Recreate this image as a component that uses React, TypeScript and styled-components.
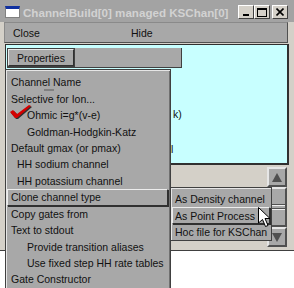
import React from "react";
import styled, { createGlobalStyle } from "styled-components";

const Global = createGlobalStyle`
  html, body { margin: 0; padding: 0; background: #ffffff; }
  body { font-family: "Liberation Sans", Arial, sans-serif; }
`;

const Page = styled.div`
  width: 294px;
  height: 288px;
  position: relative;
  overflow: hidden;
  background: #ffffff;
`;

const Window = styled.div`
  position: relative;
  width: 294px;
  height: 251px;
  box-sizing: border-box;
  background: #d4d0c8;
  display: flex;
  flex-direction: column;
  border-bottom: 1px solid #404040;
`;

const TitleBar = styled.div`
  height: 22px;
  display: flex;
  align-items: center;
  padding: 0 6px 0 5px;
  background: #a3a3a3;
  gap: 3px;
`;

const Title = styled.div`
  flex: 1;
  color: #d2d2d2;
  font-weight: bold;
  font-size: 11.6px;
  white-space: nowrap;
  padding-top: 2px;
`;

const AppIcon = styled.div`
  width: 15px;
  height: 12px;
  box-sizing: border-box;
  border: 1px solid #808080;
  border-top: 3px solid #1030a0;
  background: #ffffff;
  margin-top: 1px;
`;

const CtrlGroup = styled.div`
  display: flex;
  align-items: center;
  margin-top: 2px;
`;

const CtrlBtn = styled.div<{ $gap?: number }>`
  width: 16px;
  height: 14px;
  box-sizing: border-box;
  background: #d4d0c8;
  border: 1px solid;
  border-color: #ffffff #404040 #404040 #ffffff;
  margin-left: ${(p) => p.$gap ?? 0}px;
  display: flex;
  align-items: center;
  justify-content: center;
  color: #000;
`;

const MenuBar = styled.div`
  height: 21px;
  margin: 0 6px 0 4px;
  box-sizing: border-box;
  background: #a8a8a8;
  border: 1px solid;
  border-color: #8a8a8a #505050 #505050 #8a8a8a;
  display: flex;
  align-items: center;
  font-size: 10.5px;
  color: #111;
`;

const MenuBarItem = styled.span<{ $w: number }>`
  width: ${(p) => p.$w}px;
  padding-left: 8px;
`;

const Cyan = styled.div`
  margin: 1px 5px 0 5px;
  height: 121px;
  box-sizing: border-box;
  background: #c8ffff;
  border: 1px solid #303030;
  border-right-width: 2px;
  border-bottom-width: 2px;
  padding: 3px 0 0 1px;
  position: relative;
`;

const InnerBar = styled.div`
  width: 175px;
  height: 20px;
  box-sizing: border-box;
  background: #a8a8a8;
  border-right: 1px solid #404040;
  border-bottom: 1px solid #404040;
  padding: 1px 0 0 1px;
`;

const PropBtn = styled.div`
  width: 66px;
  height: 17px;
  box-sizing: border-box;
  border: 1px solid;
  border-color: #e8e8e8 #303030 #303030 #e8e8e8;
  outline: 1px solid #404040;
  background: #a8a8a8;
  font-size: 10.5px;
  color: #111;
  display: flex;
  align-items: center;
  justify-content: center;
`;

const BehindText = styled.div<{ $top: number; $left: number }>`
  position: absolute;
  left: ${(p) => p.$left}px;
  top: ${(p) => p.$top}px;
  font-size: 10.5px;
  color: #111;
`;

const Lower = styled.div`
  flex: 1;
  margin: 0 5px 0 5px;
  border-left: 1px solid #505050;
  display: flex;
  padding: 2px 2px 3px 0;
`;

const LowerPanel = styled.div`
  flex: 1;
  margin-top: 20px;
  border-top: 1px solid #505050;
  box-shadow: inset 0 1px 0 #e8e8e8;
`;

const Scroll = styled.div`
  width: 20px;
  display: flex;
  flex-direction: column;
  background: #a8a8a8;
`;

const ScrollBtn = styled.div<{ $h: number }>`
  height: ${(p) => p.$h}px;
  box-sizing: border-box;
  border: 2px solid;
  border-color: #e6e6e6 #505050 #505050 #e6e6e6;
  background: #a8a8a8;
  display: flex;
  align-items: center;
  justify-content: center;
`;

const Thumb = styled.div`
  flex: 1;
  box-sizing: border-box;
  border: 2px solid;
  border-color: #e6e6e6 #505050 #505050 #e6e6e6;
  background: #a8a8a8;
  display: flex;
  flex-direction: column;
  justify-content: center;
  gap: 2px;
`;

const Grip = styled.div`
  height: 1px;
  background: #505050;
  border-bottom: 1px solid #f0f0f0;
`;

const Menu = styled.div`
  position: absolute;
  left: 5px;
  top: 69px;
  width: 166px;
  height: 222px;
  box-sizing: border-box;
  background: #a8a8a8;
  border: 1px solid #404040;
  box-shadow: inset 1px 1px 0 #e6e6e6, inset -1px -1px 0 #707070;
  padding: 4px 2px 0 1px;
  display: flex;
  flex-direction: column;
  font-size: 10.5px;
  color: #111;
`;

const Item = styled.div<{ $indent: number; $active?: boolean }>`
  height: 16.45px;
  box-sizing: border-box;
  display: flex;
  align-items: center;
  padding-left: ${(p) => p.$indent}px;
  white-space: nowrap;
  position: relative;
  ${(p) =>
    p.$active
      ? `border: 1px solid; border-color: #ececec #303030 #303030 #ececec; box-shadow: 1px 1px 0 #303030; padding-left: ${p.$indent - 1}px;`
      : ""}
`;

const Check = styled.svg`
  position: absolute;
  left: 3px;
  top: -2px;
`;

const Mark = styled.span`
  position: absolute;
  left: 37px;
  top: 15px;
  width: 10px;
  height: 2px;
  background: #808080;
`;

const SubMenu = styled.div`
  position: absolute;
  left: 170px;
  top: 187px;
  width: 102px;
  height: 54px;
  box-sizing: border-box;
  background: #a8a8a8;
  border: 1px solid #404040;
  box-shadow: inset 1px 1px 0 #e6e6e6;
  padding: 3px 1px 0 1px;
  display: flex;
  flex-direction: column;
  font-size: 10.5px;
  color: #111;
`;

const Cursor = styled.svg`
  position: absolute;
  left: 258px;
  top: 207px;
`;

const items: { t: string; i: number; active?: boolean; check?: boolean; mark?: boolean }[] = [
  { t: "Channel Name", i: 4, mark: true },
  { t: "Selective for Ion...", i: 4 },
  { t: "Ohmic i=g*(v-e)", i: 20, check: true },
  { t: "Goldman-Hodgkin-Katz", i: 20 },
  { t: "Default gmax (or pmax)", i: 4 },
  { t: "HH sodium channel", i: 10 },
  { t: "HH potassium channel", i: 10 },
  { t: "Clone channel type", i: 4, active: true },
  { t: "Copy gates from", i: 4 },
  { t: "Text to stdout", i: 4 },
  { t: "Provide transition aliases", i: 20 },
  { t: "Use fixed step HH rate tables", i: 20 },
  { t: "Gate Constructor", i: 4 },
];

const subItems = [
  { t: "As Density channel" },
  { t: "As Point Process", active: true },
  { t: "Hoc file for KSChan" },
];

export default function App() {
  return (
    <Page>
      <Global />
      <Window>
        <TitleBar>
          <AppIcon />
          <Title>ChannelBuild[0] managed KSChan[0]</Title>
          <CtrlGroup>
            <CtrlBtn>
              <svg width="8" height="8" viewBox="0 0 8 8">
                <rect x="1" y="6" width="6" height="2" fill="#000" />
              </svg>
            </CtrlBtn>
            <CtrlBtn>
              <svg width="10" height="9" viewBox="0 0 10 9">
                <rect x="0.5" y="0.5" width="9" height="8" fill="none" stroke="#000" />
                <rect x="0" y="0" width="10" height="2" fill="#000" />
              </svg>
            </CtrlBtn>
            <CtrlBtn $gap={2}>
              <svg width="8" height="8" viewBox="0 0 8 8">
                <path d="M0.5 0.5 L7.5 7.5 M7.5 0.5 L0.5 7.5" stroke="#000" strokeWidth="1.6" />
              </svg>
            </CtrlBtn>
          </CtrlGroup>
        </TitleBar>
        <MenuBar>
          <MenuBarItem $w={110}>Close</MenuBarItem>
          <MenuBarItem $w={60}>Hide</MenuBarItem>
        </MenuBar>
        <Cyan>
          <InnerBar>
            <PropBtn>Properties</PropBtn>
          </InnerBar>
          <BehindText $top={63} $left={167}>k)</BehindText>
          <BehindText $top={98} $left={165}>l</BehindText>
        </Cyan>
        <Lower>
          <LowerPanel />
          <Scroll>
            <ScrollBtn $h={20}>
              <svg width="10" height="9" viewBox="0 0 10 9">
                <path d="M5 0 L10 9 L0 9 Z" fill="#505050" />
              </svg>
            </ScrollBtn>
            <Thumb>
              <Grip />
              <Grip />
            </Thumb>
            <ScrollBtn $h={20}>
              <svg width="10" height="9" viewBox="0 0 10 9">
                <path d="M0 0 L10 0 L5 9 Z" fill="#505050" />
              </svg>
            </ScrollBtn>
          </Scroll>
        </Lower>
        <Menu>
          {items.map((it) => (
            <Item key={it.t} $indent={it.i} $active={it.active}>
              {it.check && (
                <Check width="23" height="15" viewBox="0 0 23 15">
                  <path d="M1 8 L4 6 L8 10 L20 1 L22 2 L8 14 L6 14 Z" fill="#303030" />
                  <path d="M0 7 L3 5 L7 9 L19 0 L21 1 L7 13 L5 13 Z" fill="#d40000" />
                </Check>
              )}
              {it.t}
              {it.mark && <Mark />}
            </Item>
          ))}
        </Menu>
        <SubMenu>
          {subItems.map((it) => (
            <Item key={it.t} $indent={3} $active={it.active}>
              {it.t}
            </Item>
          ))}
        </SubMenu>
        <Cursor width="14" height="22" viewBox="0 0 14 22">
          <path d="M0.5 0.5 L0.5 16 L4.5 12.5 L7.5 19.5 L10 18.5 L7 11.5 L12 11.5 Z" fill="#ffffff" stroke="#000" strokeWidth="1" />
        </Cursor>
      </Window>
    </Page>
  );
}
